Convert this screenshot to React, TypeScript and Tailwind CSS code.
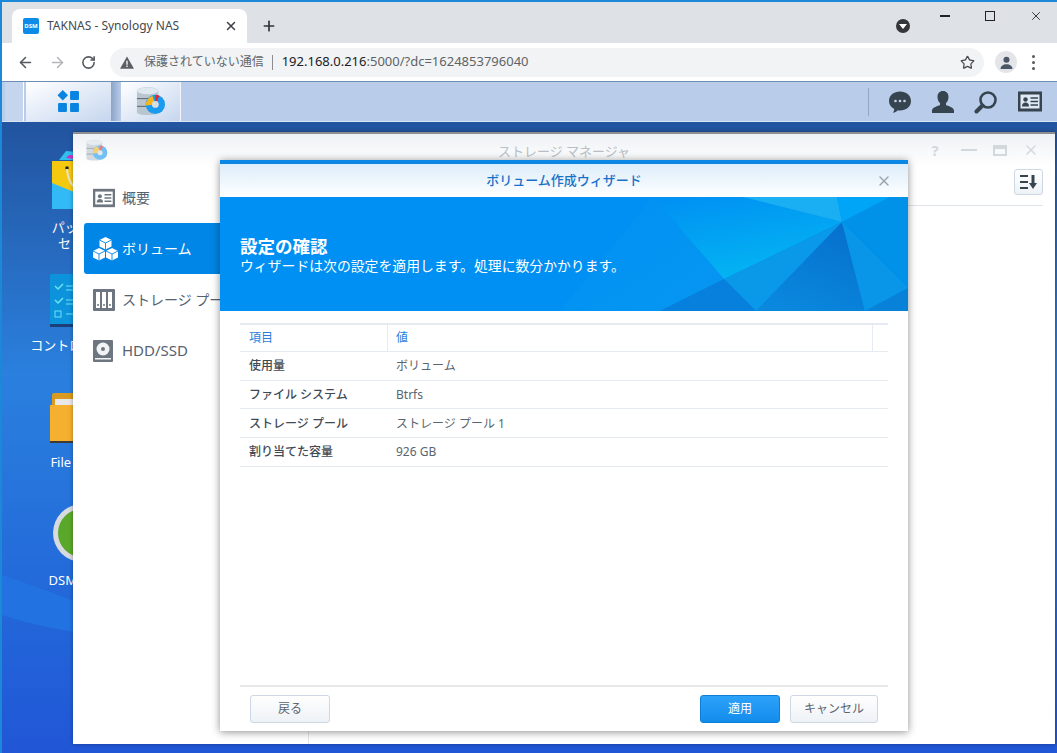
import React from "react";
import { ArrowLeft, ArrowRight, Plus, RotateCw, Star, X } from "lucide-react";

const rows = [
  { label: "使用量", value: "ボリューム" },
  { label: "ファイル システム", value: "Btrfs" },
  { label: "ストレージ プール", value: "ストレージ プール 1" },
  { label: "割り当てた容量", value: "926 GB" },
];

// ストレージ マネージャ icon, used in the taskbar and the window title
const StorageIcon = ({ className }: { className: string }) => (
  <svg viewBox="0 0 32 32" className={className}>
    <path d="M2 5c0-5 22-5 22 0v22c0 4-22 4-22 0z" fill="#b9c6cf" />
    <ellipse cx="13" cy="5" rx="11" ry="3.4" fill="#dfe8ee" />
    <path d="M2 13h22M2 21h22" stroke="#55636e" strokeWidth="1" />
    <circle cx="21" cy="19" r="10" fill="#1a9bf0" />
    <path d="M21 19V9a10 10 0 0 1 4 1z" fill="#e8242c" />
    <path d="M21 19l-10 1a10 10 0 0 1 7-10z" fill="#f5b51c" />
    <circle cx="21" cy="19" r="3.5" fill="#d8dde2" />
  </svg>
);

const ChatIcon = () => (
  <svg viewBox="0 0 24 24" className="w-[24px] h-[24px]">
    <path d="M12 1.500c6 0 11 3.800 11 9.500s-5 9.500-11 9.500c-.8 0-1.500 0-2.200-.2-1.300 1.300-3 2.200-4.800 2.500.7-1 1.200-2.300 1.300-3.800C3 17.300 1 14.400 1 11 1 5.300 6 1.500 12 1.500z" fill="#36444f" />
    <circle cx="7.500" cy="11" r="1.300" fill="#c5d4ea" />
    <circle cx="12" cy="11" r="1.300" fill="#c5d4ea" />
    <circle cx="16.500" cy="11" r="1.300" fill="#c5d4ea" />
  </svg>
);

const PersonIcon = () => (
  <svg viewBox="0 0 24 24" className="w-[24px] h-[24px]">
    <path d="M12 1c3.500 0 5.500 2.500 5.500 6 0 2.600-1 4.800-2.500 6v2c2 1.200 7.500 2 8 5.500V23H1v-2.500C1.500 17 7 16.200 9 15v-2C7.500 11.800 6.500 9.600 6.500 7c0-3.500 2-6 5.500-6z" fill="#36444f" />
  </svg>
);

const SearchIcon = () => (
  <svg viewBox="0 0 24 24" className="w-[24px] h-[24px]" fill="none" stroke="#36444f">
    <circle cx="14" cy="10" r="7.500" strokeWidth="2.600" />
    <path d="M8.500 15.500 2.500 21.500" strokeWidth="4" strokeLinecap="round" />
  </svg>
);

const CardIcon = ({ className, color, bg }: { className: string; color: string; bg: string }) => (
  <svg viewBox="0 0 24 20" className={className}>
    <rect x="0" y="0" width="24" height="20" fill={color} />
    <rect x="2.500" y="3" width="19" height="14" fill={bg} />
    <circle cx="7.500" cy="8" r="2.200" fill={color} />
    <path d="M4 15c0-3 1.500-4 3.500-4s3.500 1 3.500 4z" fill={color} />
    <path d="M12.500 6.500H20M12.500 10H20M12.500 13.500H20" stroke={color} strokeWidth="1.500" />
  </svg>
);

const Cube = ({ x, y }: { x: number; y: number }) => (
  <g transform={`translate(${x} ${y})`}>
    <path d="M6 0l6 3v6.500l-6 3-6-3V3z" fill="#fff" />
    <path d="M0 3l6 3 6-3M6 6v6.500" fill="none" stroke="#0086e6" strokeWidth="0.900" />
  </g>
);

const CubesIcon = () => (
  <svg viewBox="0 0 25 24" className="w-[25px] h-[24px]">
    <Cube x={6.500} y={0} />
    <Cube x={0} y={11} />
    <Cube x={13} y={11} />
  </svg>
);

const PoolIcon = () => (
  <svg viewBox="0 0 22 22" className="w-[22px] h-[22px]">
    <rect width="22" height="22" rx="1" fill="#6d7680" />
    <path d="M3 3h4v16H3zM9 3h4v16H9zM15 3h4v16h-4z" fill="#fff" />
    <circle cx="5" cy="16" r="1" fill="#6d7680" />
    <circle cx="11" cy="16" r="1" fill="#6d7680" />
    <circle cx="17" cy="16" r="1" fill="#6d7680" />
  </svg>
);

const DiskIcon = () => (
  <svg viewBox="0 0 20 22" className="w-[20px] h-[22px]">
    <rect width="20" height="22" rx="1" fill="#6d7680" />
    <circle cx="10" cy="9" r="6.500" fill="#f1f3f5" />
    <circle cx="10" cy="9" r="2" fill="#6d7680" />
    <rect x="2" y="18" width="16" height="1.500" fill="#f1f3f5" />
  </svg>
);

const SideItem = ({ icon, label, active, textClass = "text-[14px]" }: { icon: React.ReactNode; label: string; active?: boolean; textClass?: string }) => (
  <div className={`flex items-center h-[51px] rounded-[3px] pl-[9px] ${active ? "bg-[#0086e6] text-white" : "text-[#566270]"}`}>
    <span className="w-[29px] flex">{icon}</span>
    <span className={`whitespace-nowrap ${textClass}`}>{label}</span>
  </div>
);

const DesktopIcon = ({ top, gap, label, children }: { top: string; gap: string; label: string; children: React.ReactNode }) => (
  <div className={`absolute left-[22px] w-[120px] flex flex-col items-center ${top}`}>
    <div className="w-[64px] h-[64px] mr-[5px]">{children}</div>
    <span className={`${gap} text-[13px] leading-[16px] text-white text-center whitespace-pre-line`}>{label}</span>
  </div>
);

export default function App() {
  return (
    <div className="w-[1057px] h-[753px] overflow-hidden flex flex-col border-t-2 border-l-2 border-[#1b88d8] bg-white font-['Noto_Sans','Noto_Sans_CJK_JP',sans-serif]">
      {/* タブ */}
      <div className="h-[41px] bg-[#dee1e6] flex items-end pl-[10px] relative shrink-0">
        <div className="w-[235px] h-[34px] bg-white rounded-t-[8px] flex items-center pl-[11px] pr-[9px]">
          <div className="w-[16px] h-[16px] rounded-[2px] bg-[#0d8be8] text-white text-[6px] font-bold flex items-center justify-center">DSM</div>
          <span className="ml-[8px] text-[12px] text-[#45494e] flex-1">TAKNAS - Synology NAS</span>
          <X className="w-[14px] h-[14px] text-[#3b3f44]" strokeWidth={2.500} />
        </div>
        <Plus className="ml-[14px] mb-[9px] w-[16px] h-[16px] text-[#30343a]" strokeWidth={2.500} />
        <span className="ml-[619px] mb-[10px] w-[14px] h-[14px] rounded-full bg-[#33373c] flex items-center justify-center">
          <span className="w-0 h-0 border-l-[4px] border-r-[4px] border-t-[5px] border-l-transparent border-r-transparent border-t-white" />
        </span>
        <div className="absolute right-[14px] top-[7px] flex items-center">
          <div className="w-[10px] h-[1.500px] bg-[#222]" />
          <div className="ml-[35px] w-[10px] h-[10px] border-[1.500px] border-[#222]" />
          <X className="ml-[34px] w-[14px] h-[14px] text-[#222]" strokeWidth={1.500} />
        </div>
      </div>

      {/* アドレス バー */}
      <div className="h-[38px] bg-white flex items-center pl-[15px] shrink-0">
        <ArrowLeft className="w-[17px] h-[17px] text-[#55595e]" strokeWidth={2.200} />
        <ArrowRight className="ml-[15px] w-[17px] h-[17px] text-[#b4b6b9]" strokeWidth={2.200} />
        <RotateCw className="ml-[15px] w-[15px] h-[15px] text-[#55595e]" strokeWidth={2.500} />
        <div className="ml-[14px] w-[874px] h-[29px] rounded-full bg-[#f1f3f4] flex items-center pl-[10px] pr-[9px]">
          <svg viewBox="0 0 16 14" className="w-[14px] h-[13px]">
            <path d="M8 0l8 14H0z" fill="#5b5f64" />
            <path d="M7.200 5h1.600v4.500H7.200zM7.200 10.500h1.600V12H7.200z" fill="#f1f3f4" />
          </svg>
          <span className="ml-[10px] text-[12px] text-[#62666b]">保護されていない通信</span>
          <span className="ml-[8px] w-px h-[15px] bg-[#8a8e93]" />
          <span className="ml-[9px] text-[13px] text-[#5f6368]"><span className="text-[#202124]">192.168.0.216</span>:5000/?dc=1624853796040</span>
          <Star className="ml-auto w-[15px] h-[15px] text-[#45494e]" strokeWidth={2} />
        </div>
        <span className="ml-[11px] w-[22px] h-[22px] rounded-full bg-[#e3e5e8] flex items-center justify-center">
          <svg viewBox="0 0 12 12" className="w-[13px] h-[13px]" fill="#4c5867">
            <circle cx="6" cy="3.500" r="2.800" />
            <path d="M0.500 12c0-3 2.500-4.500 5.500-4.500s5.500 1.500 5.500 4.500z" />
          </svg>
        </span>
        <span className="ml-[15px] flex flex-col gap-[3px]">
          <span className="w-[3px] h-[3px] rounded-full bg-[#55595e]" />
          <span className="w-[3px] h-[3px] rounded-full bg-[#55595e]" />
          <span className="w-[3px] h-[3px] rounded-full bg-[#55595e]" />
        </span>
      </div>

      {/* タスクバー */}
      <div className="h-[41px] shrink-0 bg-[#b9cdeb] border-t border-t-[#6d8db5] border-b border-b-[#dbe6f5] flex items-stretch pl-[3px]">
        <div className="w-[19px] bg-[#c6d5ee] border-r border-white" />
        <div className="ml-[2px] w-[85px] bg-gradient-to-br from-white to-[#c6d6ef] flex items-center justify-center">
          <svg viewBox="0 0 22 22" className="w-[23px] h-[23px]" fill="#0a84e0">
            <path d="M5.500 0l5 5-5 5-5-5z" />
            <rect x="12.500" y="1" width="8.500" height="8.500" rx="1" />
            <rect x="1" y="12.500" width="8.500" height="8.500" rx="1" />
            <rect x="12.500" y="12.500" width="8.500" height="8.500" rx="1" />
          </svg>
        </div>
        <div className="w-[10px] bg-gradient-to-r from-[#8ea4c6] to-[#b9cdeb]" />
        <div className="w-[60px] bg-gradient-to-br from-white to-[#c6d6ef] border-r border-[#f4f7fc] flex items-center justify-center">
          <StorageIcon className="w-[31px] h-[31px]" />
        </div>
        <div className="ml-auto flex items-center pr-[15px]">
          <span className="w-px h-[28px] bg-[#8fa6c6] mr-[19px]" />
          <ChatIcon />
          <span className="ml-[19px]"><PersonIcon /></span>
          <span className="ml-[19px]"><SearchIcon /></span>
          <span className="ml-[20px]"><CardIcon className="w-[24px] h-[21px]" color="#36444f" bg="#dfe8f5" /></span>
        </div>
      </div>

      {/* デスクトップ */}
      <div className="relative flex-1 bg-gradient-to-b from-[#22549f] via-[#2a80de] via-40% to-[#2156d6]">
        <svg viewBox="0 0 100 200" preserveAspectRatio="none" className="absolute left-0 top-[453px] w-[100px] h-[200px]">
          <path d="M0 0 C30 10 50 18 100 36 L100 62 C60 55 30 50 0 40z" fill="#2272e2" />
        </svg>

        <DesktopIcon top="top-[24px]" gap="mt-[9px]" label={"パッケージ\nセンター"}>
          <svg viewBox="-2 0 64 64">
            <path d="M7 14L14 5l34 3 4 6z" fill="#2fc0ec" />
            <path d="M14 12l3-3 34 2 4 5z" fill="#d32fc9" />
            <path d="M0 15h64v46H0z" fill="#f5c90f" />
            <path d="M0 37l64 26H0z" fill="#31baf5" />
            <circle cx="15" cy="22" r="1.800" fill="#222" />
            <path d="M15 23c1 12 5 17 12 22" fill="none" stroke="#e8e3d0" strokeWidth="2" />
          </svg>
        </DesktopIcon>
        <DesktopIcon top="top-[152px]" gap="mt-[-1px]" label="コントロール パネル">
          <svg viewBox="0 0 64 54">
            <rect x="0" y="0" width="64" height="50" fill="#0d93dc" />
            <rect x="0" y="50" width="64" height="3" fill="#1d3f78" />
            <path d="M5 12l3 3 5-5M5 26l3 3 5-5" fill="none" stroke="#6be3f5" strokeWidth="1.500" />
            <rect x="5" y="37" width="6" height="6" fill="none" stroke="#6be3f5" />
            <path d="M16 12h28M16 16h20M16 26h28M16 30h20M16 40h28" stroke="#6be3f5" strokeWidth="1.200" />
          </svg>
        </DesktopIcon>
        <DesktopIcon top="top-[270px]" gap="mt-[-2px]" label="File Station">
          <svg viewBox="0 0 64 54">
            <path d="M2 3a2 2 0 0 1 2-2h56a2 2 0 0 1 2 2v10H2z" fill="#d89a20" />
            <rect x="5" y="7" width="50" height="8" fill="#e8e8e8" />
            <path d="M0 13h64v36H0z" fill="#f4b02e" />
            <rect x="0" y="49" width="64" height="2" fill="#3a3a3a" />
          </svg>
        </DesktopIcon>
        <DesktopIcon top="top-[381px]" gap="mt-[5px]" label="DSM ヘルプ">
          <svg viewBox="0 0 64 64">
            <circle cx="32" cy="30" r="29" fill="#d7dbe0" />
            <circle cx="32" cy="30" r="24" fill="#5aa82a" />
            <text x="32" y="40" textAnchor="middle" fontSize="28" fontWeight="700" fill="#fff">?</text>
          </svg>
        </DesktopIcon>

        {/* ストレージ マネージャ */}
        <div className="absolute left-[71px] top-[10px] w-[982px] h-[612px] bg-white flex flex-col shadow-[0_0_4px_rgba(0,0,0,0.35)]">
          <div className="h-[34px] shrink-0 border-t-2 border-t-[#8b8f94] bg-gradient-to-b from-[#eef1f4] to-white flex items-center relative pl-[12px] pr-[16px]">
            <StorageIcon className="w-[23px] h-[23px] opacity-60" />
            <span className="absolute inset-x-0 top-[8px] text-center text-[13px] text-[#b9bfc6]">ストレージ マネージャ</span>
            <div className="ml-auto flex items-center gap-[16px] text-[#d3d8dd]">
              <span className="w-[16px] mr-[2px] text-center text-[15px] font-bold leading-none">?</span>
              <span className="w-[16px] h-[2px] bg-[#d3d8dd]" />
              <span className="w-[14px] h-[11px] border-2 border-t-[4px] border-[#d3d8dd]" />
              <X className="w-[16px] h-[16px]" strokeWidth={2} />
            </div>
          </div>
          <div className="flex-1 flex min-h-0">
            <div className="w-[236px] border-r border-[#e3e6ea] pl-[11px] pr-[11px] pt-[6px]">
              <SideItem icon={<CardIcon className="w-[22px] h-[20px]" color="#6d7680" bg="#fff" />} label="概要" />
              <SideItem active icon={<CubesIcon />} label="ボリューム" />
              <SideItem icon={<PoolIcon />} label="ストレージ プール" />
              <SideItem icon={<DiskIcon />} label="HDD/SSD" textClass="text-[15px]" />
            </div>
            <div className="flex-1 flex flex-col pr-[12px] pl-[14px] pt-[3px]">
              <div className="h-[37px] border-b border-[#dfe4ea] flex justify-end">
                <button className="w-[29px] h-[26px] rounded-[3px] border border-[#cdd8e4] bg-gradient-to-b from-white to-[#eef2f6] flex items-center justify-center">
                  <svg viewBox="0 0 20 16" className="w-[20px] h-[16px]">
                    <path d="M1 2h8M1 8h8M1 14h8" stroke="#36444f" strokeWidth="2" />
                    <path d="M14 1v9" stroke="#36444f" strokeWidth="3" />
                    <path d="M10 9h8l-4 6z" fill="#36444f" />
                  </svg>
                </button>
              </div>
            </div>
          </div>

          {/* ウィザード */}
          <div className="absolute left-[147px] top-[28px] w-[688px] h-[571px] bg-white flex flex-col border-t-[4px] border-t-[#0a86e4] shadow-[0_1px_8px_rgba(0,0,0,0.45)]">
            <div className="h-[33px] shrink-0 bg-gradient-to-b from-[#dcedfa] to-white flex items-center justify-center relative">
              <span className="text-[13px] font-medium text-[#1a72c8]">ボリューム作成ウィザード</span>
              <X className="absolute right-[16px] w-[16px] h-[16px] text-[#9aa3ab]" strokeWidth={2} />
            </div>
            <div className="h-[114px] shrink-0 relative overflow-hidden bg-[#0090f3] flex flex-col justify-center pl-[20px] text-white">
              <svg viewBox="0 0 688 114" className="absolute inset-0 w-[688px] h-[114px]">
                <defs>
                  <linearGradient id="facetTop" x1="0.2" y1="0" x2="0.6" y2="1">
                    <stop offset="0" stopColor="#0092f3" />
                    <stop offset="1" stopColor="#04b6f2" />
                  </linearGradient>
                  <linearGradient id="facetLeft" x1="0" y1="0" x2="1" y2="1">
                    <stop offset="0" stopColor="#0090f3" />
                    <stop offset="1" stopColor="#0696f1" />
                  </linearGradient>
                  <linearGradient id="facetDeep" x1="0.8" y1="0" x2="0.3" y2="1">
                    <stop offset="0" stopColor="#0670cc" />
                    <stop offset="1" stopColor="#0a88de" />
                  </linearGradient>
                </defs>
                <path d="M340 114L433 0l71 82-64 32z" fill="url(#facetLeft)" />
                <path d="M433 0h90l99 25-118 57z" fill="url(#facetTop)" />
                <path d="M523 0h94l5 25z" fill="#1aaef3" />
                <path d="M617 0h53l-48 25z" fill="#00a5f7" />
                <path d="M670 0h18v91l-66-66z" fill="#0092e8" />
                <path d="M504 82l118-57-86 89z" fill="#0a98e8" />
                <path d="M440 114l64-32 32 32z" fill="#0680dc" />
                <path d="M536 114l86-89 23 89z" fill="url(#facetDeep)" />
                <path d="M622 25l66 66-43 23z" fill="#0a96e8" />
                <path d="M645 114l43-23v23z" fill="#0882d8" />
              </svg>
              <div className="relative mt-[3px] text-[17.500px] font-bold leading-[20px]">設定の確認</div>
              <div className="relative text-[13.850px] leading-[20px]">ウィザードは次の設定を適用します。処理に数分かかります。</div>
            </div>
            <div className="flex-1 px-[20px] pt-[12px] flex flex-col">
              <div className="border-t-2 border-[#e6ebf1] text-[12px]">
                <div className="h-[27px] flex items-center border-b border-[#e6ebf1] text-[#2a7fdc]">
                  <div className="w-[148px] h-full flex items-center pl-[9px] border-r border-[#e6ebf1]">項目</div>
                  <div className="flex-1 h-full flex items-center pl-[8px]">値</div>
                  <div className="w-[16px] h-full border-l border-[#e6ebf1]" />
                </div>
                {rows.map((row) => (
                  <div key={row.label} className="h-[28.700px] pt-[1px] flex items-center border-b border-[#e6ebf1]">
                    <div className="w-[148px] pl-[9px] font-medium text-[#3f4a55]">{row.label}</div>
                    <div className="pl-[8px] text-[#5a6570]">{row.value}</div>
                  </div>
                ))}
              </div>
              <div className="mt-auto h-[46px] border-t-2 border-[#e8e8e8] flex items-center px-[10px] pb-[1px] text-[12px]">
                <button className="w-[80px] h-[28px] rounded-[3px] border border-[#cdd8e4] bg-gradient-to-b from-white to-[#eef2f6] text-[#5a6570]">戻る</button>
                <button className="ml-auto w-[80px] h-[28px] rounded-[3px] border border-[#0d7fd8] bg-gradient-to-b from-[#2ca2fa] to-[#128cec] text-white">適用</button>
                <button className="ml-[10px] w-[88px] h-[28px] rounded-[3px] border border-[#cdd8e4] bg-gradient-to-b from-white to-[#eef2f6] text-[#5a6570]">キャンセル</button>
              </div>
            </div>
          </div>
        </div>
      </div>
    </div>
  );
}
